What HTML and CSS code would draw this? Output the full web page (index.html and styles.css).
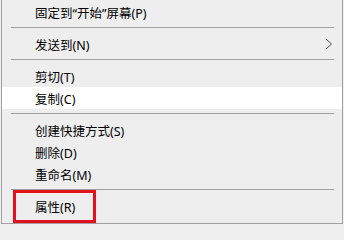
FILE: index.html
```html
<!DOCTYPE html>
<html lang="zh-CN">
<head>
<meta charset="utf-8">
<title>菜单</title>
<link rel="stylesheet" href="styles.css">
</head>
<body>
<div class="menu">
  <div class="item">固定到“开始”屏幕(P)</div>
  <div class="sep"></div>
  <div class="item">发送到(N)
    <svg class="chev" width="8" height="12" viewBox="0 0 8 12"><polyline points="1,1 6.5,6 1,11" fill="none" stroke="#4a4a4a" stroke-width="1"/></svg>
  </div>
  <div class="sep"></div>
  <div class="item">剪切(T)</div>
  <div class="item hover">复制(C)</div>
  <div class="sep"></div>
  <div class="item">创建快捷方式(S)</div>
  <div class="item">删除(D)</div>
  <div class="item">重命名(M)</div>
  <div class="sep"></div>
  <div class="item">属性(R)</div>
  <div class="mark"></div>
</div>
</body>
</html>
```
FILE: styles.css
```css
html, body {
  margin: 0;
  padding: 0;
  background: #f0f0f0;
}
.menu {
  position: relative;
  box-sizing: border-box;
  width: 342px;
  height: 224px;
  margin-left: 1px;
  padding: 1px 0 6px 0;
  background: #eeeeee;
  border-left: 1px solid #a0a0a0;
  border-right: 1px solid #a0a0a0;
  border-bottom: 1px solid #a0a0a0;
  font-family: "Noto Sans", "Noto Sans CJK SC", sans-serif;
  font-size: 12.5px;
  color: #000;
}
.item {
  display: flex;
  align-items: center;
  height: 22px;
  padding-left: 33px;
  white-space: nowrap;
}
.item.hover {
  background: #ffffff;
}
.chev {
  margin-left: auto;
  margin-right: 9px;
}
.sep {
  height: 10px;
  position: relative;
}
.sep::after {
  content: "";
  display: block;
  margin: 0 8px 0 9px;
  position: relative;
  top: 4px;
  height: 1px;
  background: #a0a0a0;
}
.mark {
  position: absolute;
  left: 11px;
  top: 190px;
  width: 77px;
  height: 27px;
  border: 3px solid #e3101e;
}
```
